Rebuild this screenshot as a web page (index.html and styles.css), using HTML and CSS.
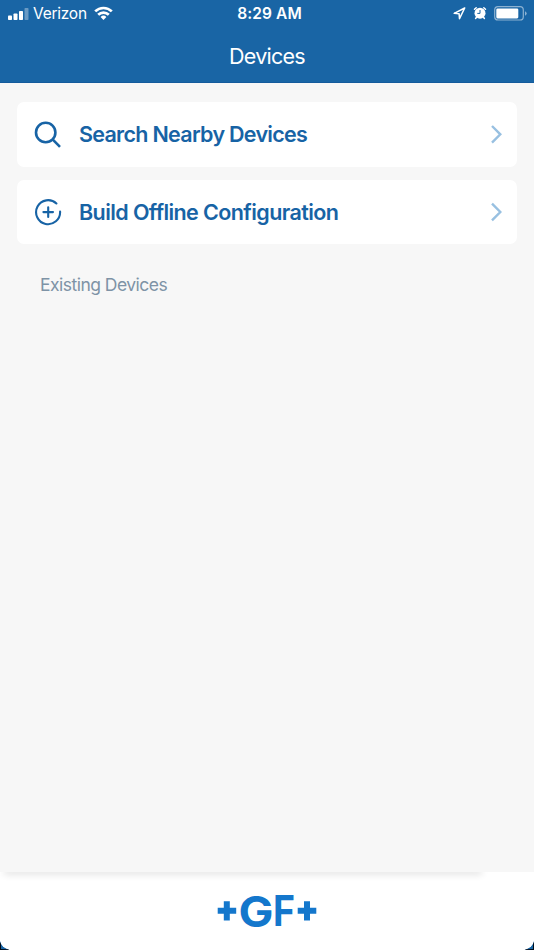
FILE: index.html
```html
<!DOCTYPE html>
<html lang="en">
<head>
<meta charset="utf-8">
<title>Devices</title>
<link rel="stylesheet" href="styles.css">
</head>
<body>
<div class="screen">
  <header class="header">
    <div class="status">
      <div class="status-left">
        <svg class="signal" width="21" height="12" viewBox="0 0 21 12" fill="#fff"><rect x="0" y="7.500" width="4" height="4.500" rx=".8"/><rect x="5.500" y="5.500" width="4" height="6.500" rx=".8"/><rect x="11" y="3" width="4" height="9" rx=".8"/><rect x="16.500" y="0" width="4" height="12" rx=".8" opacity=".35"/></svg>
        <span class="carrier">Verizon</span>
        <svg class="wifi" width="19" height="14" viewBox="0 0 19 14" fill="none" stroke="#fff" stroke-width="2.700"><path d="M1.200 5.400a11.800 11.800 0 0 1 16.600 0M4.200 8.800a7.600 7.600 0 0 1 10.600 0"/><path d="M9.500 13.900 6.600 11a4.200 4.200 0 0 1 5.800 0z" fill="#fff" stroke="none"/></svg>
      </div>
      <span class="time">8:29 AM</span>
      <div class="status-right">
        <svg width="13" height="13" viewBox="0 0 13 13" fill="none" stroke="#fff" stroke-width="1.500" stroke-linejoin="round"><path d="M11.700 1 1.200 6.300l4.900.5.400 4.900z"/></svg>
        <svg width="14" height="14" viewBox="0 0 14 14"><path d="M1.500 3.300 3.200 1.700M12.500 3.300 10.800 1.700M3.500 11.300 2.600 12.500M10.500 11.300l.9 1.200" stroke="#fff" stroke-width="1.500" stroke-linecap="round"/><circle cx="7" cy="7.200" r="5.500" fill="#fff"/><path d="M7 4v3.400H4.300" fill="none" stroke="#1965a5" stroke-width="1"/></svg>
        <svg width="33" height="15" viewBox="0 0 33 15"><rect x=".7" y=".7" width="28.600" height="13.300" rx="3.300" fill="none" stroke="#fff" stroke-opacity=".5" stroke-width="1.200"/><rect x="2.300" y="2.400" width="22" height="10" rx="1.300" fill="#fff"/><path d="M31 5.300q1.700.7 1.700 2.200T31 9.700z" fill="#fff" fill-opacity=".5"/></svg>
      </div>
    </div>
    <h1 class="title">Devices</h1>
  </header>
  <main class="content">
    <a class="card">
      <svg class="card-icon search-icon" width="28" height="28" viewBox="0 0 28 28" fill="none" stroke="#1763a5" stroke-width="2.600"><circle cx="11.700" cy="11.500" r="9.700"/><path d="m18.600 18.400 7.400 7.400"/></svg>
      <span class="card-label search">Search Nearby Devices</span>
      <svg width="12" height="20" viewBox="0 0 12 20" fill="none" stroke="#98c0e1" stroke-width="2.400"><path d="m1 2 8.300 8.300L1 18.600"/></svg>
    </a>
    <a class="card">
      <svg class="card-icon" width="28" height="28" viewBox="0 0 28 28" fill="none" stroke="#1763a5" stroke-width="2.100" stroke-linecap="round"><path d="M22.400 5.500A12 12 0 1 0 26.100 13.500"/><path d="M14.200 9.300v9.600M9.400 14.100H19"/></svg>
      <span class="card-label build">Build Offline Configuration</span>
      <svg width="12" height="20" viewBox="0 0 12 20" fill="none" stroke="#98c0e1" stroke-width="2.400"><path d="m1 1.700 8.300 8.300L1 18.300"/></svg>
    </a>
    <h2 class="section">Existing Devices</h2>
  </main>
  <footer class="footer">
    <div class="footer-shadow"></div>
    <svg class="logo" width="100" height="58" viewBox="0 -9 100 58" fill="#1477cc" role="img" aria-label="+GF+">
      <path d="M6.800 10.200h6v6.600h6.400v6h-6.400v6.600h-6v-6.600H.7v-6h6.100zM87 10.200h6v6.600h6.300v6H93v6.600h-6v-6.600h-6.300v-6H87z"/>
      <text class="logo-text" x="21.500" y="35.500" textLength="35" lengthAdjust="spacingAndGlyphs">G</text>
      <text class="logo-text" x="56" y="35" textLength="22" lengthAdjust="spacingAndGlyphs">F</text>
    </svg>
    <svg class="corner left" width="10" height="10" viewBox="0 0 10 10"><path d="M0 1Q1.500 8.500 9.500 10H0z" fill="#1965a5"/><path d="M0 2 1 4V9l7 .3L9 10H0z" fill="#000b18"/><path d="M1 4.500Q3 8 7 9H1z" fill="#1965a5"/></svg>
    <svg class="corner right" width="10" height="10" viewBox="0 0 10 10"><path d="M0 1Q1.500 8.500 9.500 10H0z" fill="#1965a5"/><path d="M0 2 1 4V9l7 .3L9 10H0z" fill="#000b18"/><path d="M1 4.500Q3 8 7 9H1z" fill="#1965a5"/></svg>
  </footer>
</div>
</body>
</html>
```
FILE: styles.css
```css
* { box-sizing: border-box; }
body { margin: 0; font-family: Inter, "Liberation Sans", sans-serif; }
svg { display: block; flex: none; }
.screen { width: 534px; height: 950px; display: flex; flex-direction: column; background: #f7f7f7; overflow: hidden; }
.header { height: 83px; background: #1965a5; color: #fff; border-bottom: 1px solid #145b9c; }
.status { height: 28px; padding: 0 7px 0 8px; display: grid; grid-template-columns: 1fr auto 1fr; align-items: center; }
.status-left { display: flex; align-items: center; }
.signal { margin-top: -1px; }
.carrier { font-size: 15.500px; line-height: 28px; letter-spacing: -.25px; margin-left: 4px; width: 54px; white-space: nowrap; }
.wifi { margin-left: 7px; margin-top: -2px; }
.time { font-size: 15.500px; font-weight: 600; letter-spacing: .1px; line-height: 28px; padding-left: 4px; }
.status-right { display: flex; justify-content: flex-end; align-items: center; gap: 7px; margin-top: -2px; }
.title { margin: 0; font-size: 21.500px; letter-spacing: -.75px; font-weight: 400; line-height: 56px; text-align: center; }
.content { flex: 1; padding: 19px 17px; display: flex; flex-direction: column; }
.card { height: 64.500px; margin-bottom: 13px; padding: 0 14px 0 17px; display: flex; align-items: center; background: #fff; border-radius: 7px; color: #1763a5; }
.search-icon { position: relative; top: 1px; }
.card-label { flex: 1; margin-left: 17px; font-size: 21.500px; font-weight: 600; white-space: nowrap; }
.search { letter-spacing: -.71px; }
.build { letter-spacing: -.59px; }
.section { margin: 15px 0 0 23px; font-size: 17.500px; letter-spacing: -.52px; line-height: 26px; font-weight: 400; color: #7e93a6; }
.footer { position: relative; height: 78px; background: #fff; display: flex; justify-content: center; align-items: center; overflow: hidden; }
.footer-shadow { position: absolute; top: -4px; left: 4px; width: 478px; height: 4px; box-shadow: 0 2px 7px rgba(0,0,0,.16); }
.logo { overflow: visible; }
.logo-text { font-family: Inter, sans-serif; font-size: 43px; font-weight: 700; }
.corner { position: absolute; bottom: 0; left: 0; }
.corner.right { left: auto; right: 0; transform: scaleX(-1); }
```
